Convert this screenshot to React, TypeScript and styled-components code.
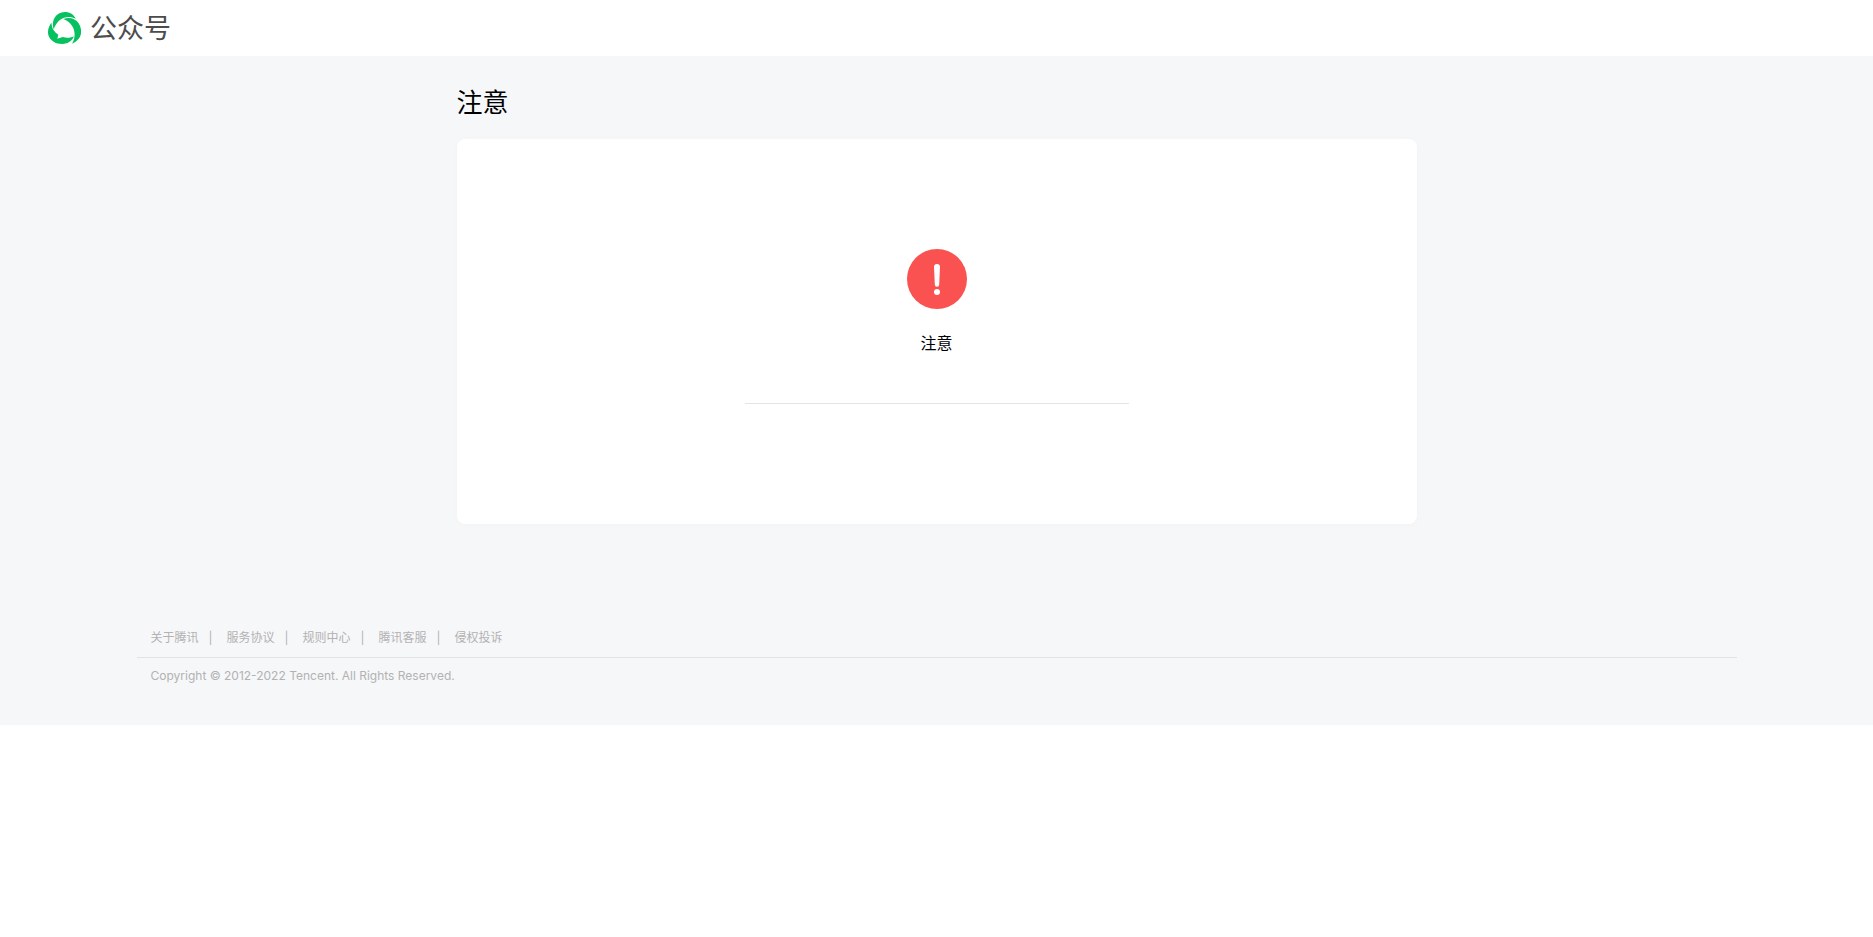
import React from "react";
import styled, { createGlobalStyle } from "styled-components";

const GlobalStyle = createGlobalStyle`
  body {
    margin: 0;
    background: #fff;
    color: #000;
    font-family: Inter, "Noto Sans CJK SC", sans-serif;
    font-size: 14px;
    line-height: 24px;
  }
`;

const Page = styled.div`
  background: #f6f7f9;
`;

const Header = styled.header`
  display: flex;
  align-items: center;
  height: 56px;
  padding: 0 48px;
  background: #fff;
`;

const Brand = styled.a`
  display: flex;
  align-items: center;
  gap: 9px;
  color: #4c4c4c;
  text-decoration: none;
`;

const BrandName = styled.span`
  padding-bottom: 2px;
  font-family: "Noto Sans CJK SC", sans-serif;
  font-size: 27px;
  line-height: 32px;
`;

const Main = styled.main`
  max-width: 960px;
  margin: 0 auto;
  padding: 23px 0 92px;
`;

const Title = styled.h1`
  margin: 0 0 17px;
  font-family: "Noto Sans CJK SC", sans-serif;
  font-size: 26px;
  font-weight: 400;
  line-height: 43px;
`;

const Card = styled.section`
  display: flex;
  flex-direction: column;
  align-items: center;
  padding: 110px 0 120px;
  background: #fff;
  border-radius: 8px;
  box-shadow: 0 1px 8px rgba(0, 0, 0, 0.02);
`;

const Message = styled.p`
  margin: 21px 0 49px;
  font-family: "Noto Sans CJK SC", sans-serif;
  font-size: 16px;
  line-height: 24px;
`;

const Divider = styled.hr`
  width: 40%;
  height: 1px;
  margin: 0;
  border: 0;
  background: #e4e4e4;
`;

const Footer = styled.footer`
  max-width: 1600px;
  margin: 0 auto;
  padding-bottom: 36px;
  color: #b2b2b2;
  font-size: 12px;
  line-height: 20px;
`;

const Links = styled.nav`
  display: flex;
  gap: 10px;
  padding: 12px 14px 9px;
  border-bottom: 1px solid #e1e2e4;
`;

const FooterLink = styled.a`
  color: inherit;
  text-decoration: none;
`;

const Separator = styled.span`
  width: 8px;
`;

const Copyright = styled.p`
  margin: 0;
  padding: 8px 14px 3px;
`;

const links = ["关于腾讯", "服务协议", "规则中心", "腾讯客服", "侵权投诉"];

const Logo = () => (
  <svg width="33" height="33" viewBox="0 0 99 99" fill="#07c160" aria-hidden="true">
    <path d="M17 52C8 26 24 0 50 0C66 0 78 8 83 20C57 8 29 18 17 52Z" />
    <path d="M46 21C65 14 83 20 92 34C106 57 101 82 72 95C88 69 80 34 46 21Z" />
    <path d="M10 32C2 43-2 57 1 69C6 86 22 96 43 96C60 95 72 88 78 73C68 78 56 79 44 75L28 80L31 68C18 60 11 48 10 32Z" />
  </svg>
);

const WarningIcon = () => (
  <svg width="60" height="60" viewBox="0 0 60 60" aria-hidden="true">
    <circle cx="30" cy="30" r="30" fill="#fa5151" />
    <path d="M27 18a3 3 0 0 1 6 0l-.8 17.500a2.200 2.200 0 0 1-4.400 0Z" fill="#fff" />
    <circle cx="30" cy="43" r="3" fill="#fff" />
  </svg>
);

export default function App() {
  return (
    <>
      <GlobalStyle />
      <Page>
        <Header>
          <Brand href="#">
            <Logo />
            <BrandName>公众号</BrandName>
          </Brand>
        </Header>
        <Main>
          <Title>注意</Title>
          <Card>
            <WarningIcon />
            <Message>注意</Message>
            <Divider />
          </Card>
        </Main>
        <Footer>
          <Links>
            {links.map((label, index) => (
              <React.Fragment key={label}>
                {index > 0 && <Separator>|</Separator>}
                <FooterLink href="#">{label}</FooterLink>
              </React.Fragment>
            ))}
          </Links>
          <Copyright>Copyright © 2012-2022 Tencent. All Rights Reserved.</Copyright>
        </Footer>
      </Page>
    </>
  );
}
